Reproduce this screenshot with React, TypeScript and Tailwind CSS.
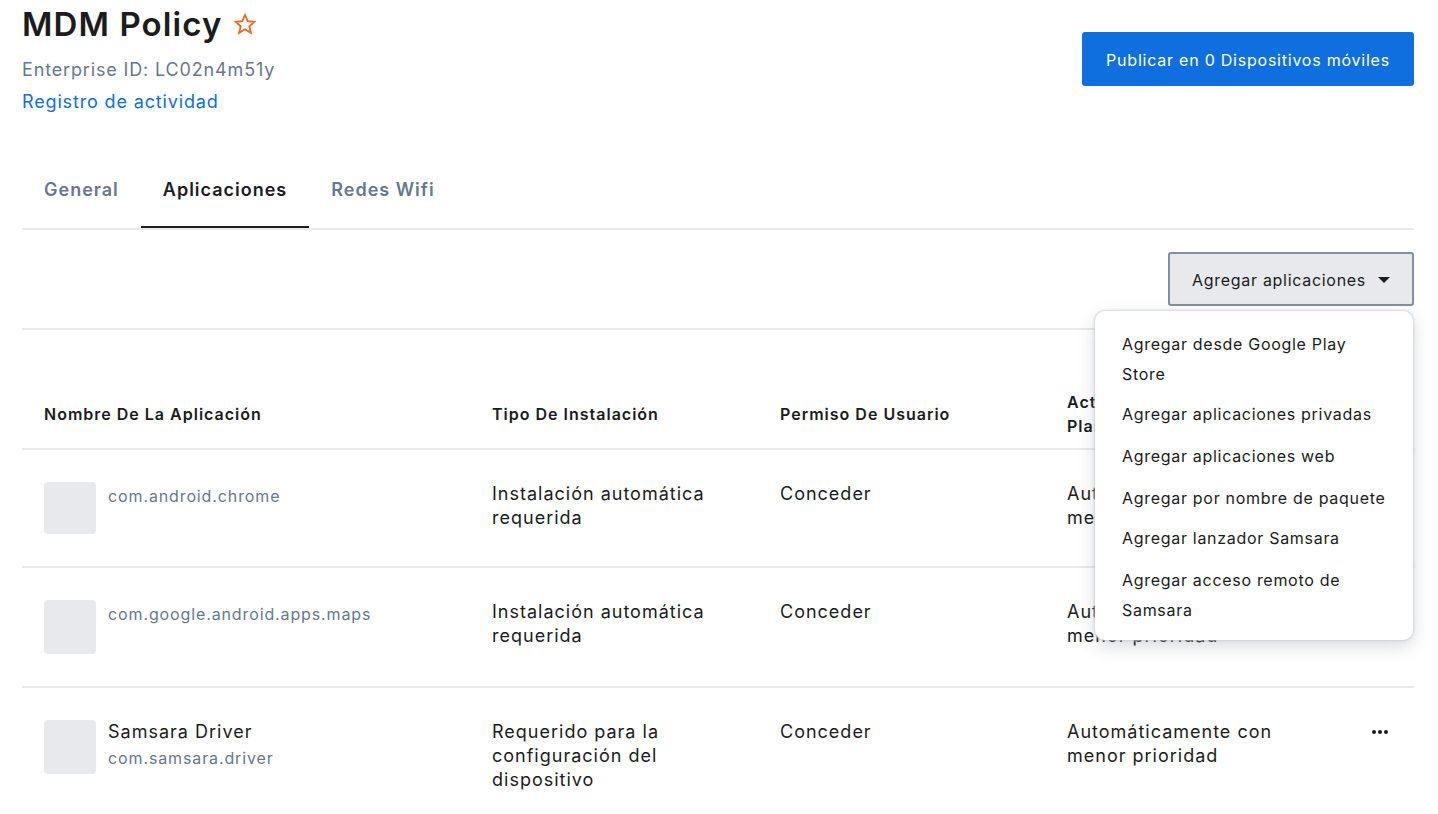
const menuItems = [
  { label: "Agregar desde Google Play Store", className: "pt-[18px] pb-[4px]" },
  { label: "Agregar aplicaciones privadas", className: "py-[6px]" },
  { label: "Agregar aplicaciones web", className: "py-[6px]" },
  { label: "Agregar por nombre de paquete", className: "pt-[6px] pb-[5px]" },
  { label: "Agregar lanzador Samsara", className: "pt-[5px] pb-[6px]" },
  { label: "Agregar acceso remoto de Samsara", className: "py-[6px]" },
];

const rows = [
  {
    name: "",
    pkg: "com.android.chrome",
    install: "Instalación automática requerida",
    permission: "Conceder",
    update: "Automáticamente con menor prioridad",
    rowClass: "h-[118px]",
    thumbClass: "h-[52px]",
  },
  {
    name: "",
    pkg: "com.google.android.apps.maps",
    install: "Instalación automática requerida",
    permission: "Conceder",
    update: "Automáticamente con menor prioridad",
    rowClass: "h-[120px]",
    thumbClass: "h-[54px]",
  },
  {
    name: "Samsara Driver",
    pkg: "com.samsara.driver",
    install: "Requerido para la configuración del dispositivo",
    permission: "Conceder",
    update: "Automáticamente con menor prioridad",
    rowClass: "h-[126px]",
    thumbClass: "h-[54px]",
  },
];

export default function App() {
  return (
    <div className="h-[814px] overflow-hidden bg-white pl-[22px] pr-6 font-['Inter',sans-serif] text-[#1a1c20]">
      {/* Header */}
      <div className="flex items-start justify-between">
        <div>
          <div className="flex h-[48px] items-center gap-[12px]">
            <h1 className="text-[33px] leading-[48px] font-semibold tracking-[1.1px]">MDM Policy</h1>
            <svg viewBox="0 0 22 22" className="h-[22px] w-[22px] text-[#f2641e]" fill="none" stroke="currentColor" strokeWidth={1.8}>
              <polygon points="11,2 13.7,8.2 20.4,8.8 15.3,13.2 16.9,19.8 11,16.3 5.1,19.8 6.7,13.2 1.6,8.8 8.3,8.2" />
            </svg>
          </div>
          <div className="mt-[10px] text-[18px] leading-6 tracking-[0.85px] text-[#68788d]">Enterprise ID: LC02n4m51y</div>
          <a className="mt-[8px] block text-[18px] leading-6 tracking-[0.85px] text-[#0f6fde]">Registro de actividad</a>
        </div>
        <button className="mt-[32px] h-[54px] w-[332px] rounded-[3px] bg-[#0f6fde] pt-[1px] text-[16px] tracking-[0.77px] text-white">
          Publicar en 0 Dispositivos móviles
        </button>
      </div>

      {/* Tabs */}
      <div className="mt-[44px] flex h-[72px] items-stretch border-b-2 border-[#e8e9ed] text-[18px] font-semibold tracking-[1px]">
        <div className="flex items-center px-[22px] pb-[8px] text-[#68788d]">General</div>
        <div className="flex items-center border-b-2 border-[#1a1c20] px-[22px] pb-[6px]">Aplicaciones</div>
        <div className="flex items-center px-[22px] pb-[8px] text-[#68788d]">Redes Wifi</div>
      </div>

      {/* Toolbar */}
      <div className="relative flex h-[100px] items-start justify-end border-b-2 border-[#e8e9ed] pt-[22px]">
        <button className="flex h-[54px] w-[246px] items-center justify-center gap-[12px] rounded-[3px] border-2 border-[#818f9f] bg-[#e8e9ed] pt-[1px] text-[16px] tracking-[0.7px]">
          Agregar aplicaciones
          <span className="h-0 w-0 border-x-[6px] border-t-[6px] border-x-transparent border-t-[#1a1c20]" />
        </button>

        {/* Dropdown menu */}
        <div className="absolute top-[81px] right-px z-10 w-[318px] rounded-[10px] bg-white pb-[9px] text-[16px] leading-[30px] tracking-[0.7px] shadow-[0_0_2px_1px_rgba(200,202,212,0.7),0_6px_18px_rgba(40,50,70,0.18)]">
          {menuItems.map((item) => (
            <div key={item.label} className={`px-[27px] ${item.className}`}>
              {item.label}
            </div>
          ))}
        </div>
      </div>

      {/* Table */}
      <div className="grid h-[120px] grid-cols-[448px_288px_287px_1fr] items-center border-b-2 border-[#e8e9ed] pt-[50px] pl-[22px] text-[16px] leading-6 font-semibold tracking-[1px]">
        <div>Nombre De La Aplicación</div>
        <div>Tipo De Instalación</div>
        <div>Permiso De Usuario</div>
        <div className="w-[190px]">Actualización Planificada</div>
      </div>
      {rows.map((row) => (
        <div
          key={row.pkg}
          className={`grid grid-cols-[448px_288px_287px_1fr] border-b-2 border-[#e8e9ed] pt-[32px] pl-[22px] text-[18px] leading-6 tracking-[1px] last:border-b-0 ${row.rowClass}`}
        >
          <div className="flex gap-3">
            <div className={`w-[52px] rounded-[4px] bg-[#e8e9ed] ${row.thumbClass}`} />
            <div>
              {row.name && <div>{row.name}</div>}
              <div className="mt-[2px] text-[16px] tracking-[0.88px] text-[#68788d]">{row.pkg}</div>
            </div>
          </div>
          <div className="w-[240px]">{row.install}</div>
          <div>{row.permission}</div>
          <div className="flex items-start justify-between pr-[26px]">
            <div className="w-[220px]">{row.update}</div>
            <div className="mt-[10px] flex gap-[2px]">
              <span className="h-[4px] w-[4px] rounded-full bg-[#1a1c20]" />
              <span className="h-[4px] w-[4px] rounded-full bg-[#1a1c20]" />
              <span className="h-[4px] w-[4px] rounded-full bg-[#1a1c20]" />
            </div>
          </div>
        </div>
      ))}
    </div>
  );
}
